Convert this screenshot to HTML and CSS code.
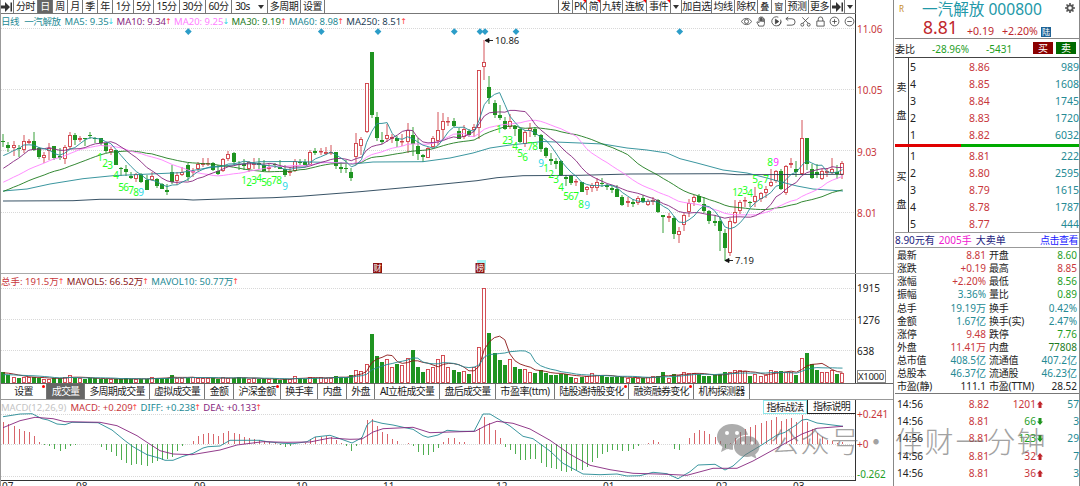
FILE: index.html
```html
<!DOCTYPE html>
<html lang="zh-CN">
<head>
    <meta charset="UTF-8">
    <title>一汽解放 000800</title>
    <link rel="stylesheet" href="styles.css">
</head>
<body>
    <div class="main">
        <div class="toolbar">
            <div class="periods">
                <span><svg width="12" height="10" viewBox="0 0 12 10"><path d="M0 3.5h4V0l5 5-5 5V6.5H0zM9.5 0.5h1.5v9H9.5z" fill="#333"/></svg></span>
                <span>分时</span>
                <span class="on">日</span>
                <span>周</span>
                <span>月</span>
                <span>季</span>
                <span>年</span>
                <span>1分</span>
                <span>5分</span>
                <span>15分</span>
                <span>30分</span>
                <span>60分</span>
                <span class="pick">30s <i class="down"></i></span>
                <span>多周期</span>
                <span>设置</span>
            </div>
            <div class="tools">
                <span>发</span>
                <span class="new">PK</span>
                <span class="new">简</span>
                <span>九转</span>
                <span class="new">连板</span>
                <span class="new">事件</span>
                <span><i class="down"></i></span>
                <span>加自选</span>
                <span>均线</span>
                <span>除权</span>
                <span class="small">叠</span>
                <span class="small">窗</span>
                <span>预测</span>
                <span>更多</span>
                <span><svg width="12" height="10" viewBox="0 0 12 10"><path d="M0 3.5h4V0l5 5-5 5V6.5H0zM9.5 0.5h1.5v9H9.5z" fill="#333"/></svg></span>
                <span><i class="down"></i></span>
            </div>
        </div>

        <div class="panel kline">
            <svg class="plot" id="kline" width="855" height="259" viewBox="0 14 855 259"></svg>
            <div class="axis red">
                <span>11.06</span>
                <span>10.05</span>
                <span>9.03</span>
                <span>8.01</span>
            </div>
            <div class="legend">
                <span class="teal name">日线</span>
                <span class="teal name">一汽解放</span>
                <span class="teal">MA5: 9.35<b class="dn">↓</b></span>
                <span class="purple">MA10: 9.34<b>↑</b></span>
                <span class="pink">MA20: 9.25<b class="dn">↓</b></span>
                <span class="dgreen">MA30: 9.19<b>↑</b></span>
                <span class="teal">MA60: 8.98<b>↑</b></span>
                <span class="navy">MA250: 8.51<b>↑</b></span>
            </div>
            <div class="icons">
                <svg viewBox="0 0 12 12"><path d="M0.5 6C3 1.5 9 1.5 11.5 6 9 10.500 3 10.500 0.500 6z"/><circle cx="6" cy="6" r="2.200"/></svg>
                <svg viewBox="0 0 12 12"><path d="M3 11C2.500 9 1 8 1 6.500c1-.5 1.500.5 2.300 1V2.500c0-1 1.400-1 1.400 0V6 1.500c0-1 1.500-1 1.500 0V6 2c0-1 1.500-1 1.500 0v4.500V3.500c0-1 1.500-1 1.500 0V8c0 1.500-.7 2-1 3z"/></svg>
                <svg viewBox="0 0 12 12"><path d="M8 1.300A5 5 0 1 0 10.500 4M8 10.700A5 5 0 0 0 11 6"/><path d="M4.800 3.500L8.500 6 4.800 8.500z" fill="#444"/></svg>
                <svg viewBox="0 0 12 12"><path d="M3.500 1L1 3l2.500 2M1 3h6.500a3.500 3.500 0 0 1 0 7H2"/></svg>
                <svg viewBox="0 0 12 12"><path d="M2.500 1.500L9 8M9.500 1.500L3 8"/><circle cx="2.500" cy="9.500" r="1.600"/><circle cx="9.500" cy="9.500" r="1.600"/></svg>
                <svg viewBox="0 0 12 12"><path d="M2 5.500h8V11H2zM3.500 5.500V3.500a2.500 2.500 0 0 1 5 0v2"/></svg>
                <svg viewBox="0 0 12 12"><circle cx="6" cy="6" r="4.800"/><path d="M3.500 6h5M6 3.500v5"/></svg>
                <svg viewBox="0 0 12 12"><circle cx="6" cy="6" r="4.800"/><path d="M3.500 6h5"/></svg>
            </div>
        </div>

        <div class="panel volume">
            <svg class="plot" id="volume" width="855" height="109" viewBox="0 275 855 109"></svg>
            <div class="axis">
                <span>1915</span>
                <span>1276</span>
                <span>638</span>
                <span class="unit">X1000</span>
            </div>
            <div class="legend">
                <span class="red">总手: 191.5万<b>↑</b></span>
                <span class="maroon">MAVOL5: 66.52万<b>↑</b></span>
                <span class="teal">MAVOL10: 50.77万<b>↑</b></span>
            </div>
        </div>

        <div class="tabs">
            <span class="dot">设置</span>
            <span class="on">成交量</span>
            <span>多周期成交量</span>
            <span>虚拟成交量</span>
            <span>金额</span>
            <span class="dot">沪深金额</span>
            <span>换手率</span>
            <span>内盘</span>
            <span>外盘</span>
            <span>AI立桩成交量</span>
            <span>盘后成交量</span>
            <span class="ttm">市盈率(ttm)</span>
            <span class="dot">陆股通持股变化</span>
            <span class="dot">融资融券变化</span>
            <span>机构探测器</span>
        </div>

        <div class="panel macd">
            <svg class="plot" id="macd" width="855" height="80" viewBox="0 400 855 80"></svg>
            <div class="axis">
                <span class="red">+0.241</span>
                <span class="red">+0</span>
                <span class="green">-0.262</span>
            </div>
            <div class="legend">
                <span class="grey">MACD(12,26,9)</span>
                <span class="red">MACD: +0.209<b>↑</b></span>
                <span class="teal">DIFF: +0.238<b>↑</b></span>
                <span class="purple">DEA: +0.133<b>↑</b></span>
            </div>
            <div class="help">
                <span>指标战法</span>
                <span>指标说明</span>
            </div>
        </div>

        <div class="dates">
            <span>07</span>
            <span>08</span>
            <span>09</span>
            <span>10</span>
            <span>11</span>
            <span>12</span>
            <span>01</span>
            <span>02</span>
            <span>03</span>
        </div>
    </div>

    <div class="side">
        <div class="quote">
            <div class="title">
                <span class="r">R</span>
                <span class="stock">一汽解放 000800</span>
                <svg class="gear" width="10" height="10" viewBox="0 0 10 10"><circle cx="5" cy="5" r="2.700" fill="none" stroke="#555" stroke-width="1.800"/><path d="M5 0v2M5 8v2M0 5h2M8 5h2M1.500 1.500l1.400 1.400M7.100 7.100l1.400 1.400M1.500 8.500l1.400-1.400M7.100 2.900l1.400-1.400" stroke="#555" stroke-width="1.600"/></svg>
            </div>
            <div class="last">
                <span class="price">8.81</span>
                <span class="chg">+0.19</span>
                <span class="chg">+2.20%</span>
                <span class="lu">陆</span>
            </div>
        </div>
        <div class="weibi">
            <span>委比</span>
            <span class="green">-28.96%</span>
            <span class="green">-5431</span>
            <span class="buy">买</span>
            <span class="sell">卖</span>
        </div>
        <div class="book">
            <div class="label"><span>卖</span><span>盘</span></div>
            <div class="levels" id="asks"></div>
        </div>
        <div class="ratio"><i></i></div>
        <div class="book bids">
            <div class="label"><span>买</span><span>盘</span></div>
            <div class="levels" id="bids"></div>
        </div>
        <div class="notice">
            <span>8.90元有</span>
            <span class="mag">2005手</span>
            <span>大卖单</span>
            <a>点击查看</a>
        </div>
        <div class="stats" id="stats"></div>
        <div class="trades" id="trades"></div>
    </div>

    <svg class="watermark" width="340" height="50" viewBox="710 417 340 50">
        <g fill="#777">
            <path d="M732 424c-9 0-15 6-15 13 0 4 2 7.500 5.500 10l-1.500 5 6-3c2 .6 3 .8 6 .8-1-9 6-15 15-15-1.500-6.500-8-10.800-16-10.800z"/>
            <path d="M747 436c-8 0-13 5-13 10.500s5 10.500 13 10.500c1.500 0 3-.2 4.500-.7l5 2.500-1.300-4.300c2.800-2 4.300-4.800 4.300-8 0-5.500-5-10.500-12.500-10.500z"/>
        </g>
        <g fill="#fff">
            <circle cx="727" cy="433" r="2"/><circle cx="737" cy="433" r="2"/>
            <circle cx="743" cy="443" r="1.700"/><circle cx="752" cy="443" r="1.700"/>
        </g>
        <g class="words">
            <text x="785" y="453">公</text>
            <text x="815" y="453">众</text>
            <text x="845" y="453">号</text>
            <text x="876" y="453">·</text>
            <text x="909" y="453">佳</text>
            <text x="939" y="453">财</text>
            <text x="970" y="453">一</text>
            <text x="1001" y="453">分</text>
            <text x="1031" y="453">钟</text>
        </g>
    </svg>

    <script src="script.js"></script>
</body>
</html>
```
FILE: styles.css
```css
* {
    box-sizing: border-box;
}
body {
    margin: 0;
    width: 1080px;
    height: 486px;
    overflow: hidden;
    position: relative;
    display: flex;
    background: white;
    color: #222;
    font-family: "Noto Sans", "Noto Sans CJK SC", sans-serif;
    font-size: 10px;
}
.red { color: #c8373c; }
.green { color: #1f9e1f; }
.dgreen { color: #1d7a1d; }
.teal { color: #258a94; }
.purple { color: #86267e; }
.pink { color: #ff80ff; }
.navy { color: #234055; }
.maroon { color: #8a1616; }
.grey { color: #c4c4c4; }
.black { color: #222; }

.main {
    width: 894px;
    height: 486px;
    border-left: 1px solid #999;
    border-right: 1px solid #888;
    overflow: hidden;
}

/* 顶部工具栏 */
.toolbar {
    display: flex;
    justify-content: space-between;
    width: 855px;
    height: 14px;
    border-bottom: 1px solid #777;
}
.periods, .tools {
    display: grid;
    line-height: 13px;
}
.periods {
    grid-template-columns: 13px 24px 15px 15px 15px 15px 15px 21px 20px 26px 26px 26px 36px 33px 24px;
}
.tools {
    grid-template-columns: 14px 14px 14px 22px 24px 24px 11px 30px 23px 23px 14px 14px 23px 22px 14px 11px;
    border-left: 1px solid #666;
}
.toolbar span {
    display: flex;
    align-items: center;
    justify-content: center;
    height: 13px;
    position: relative;
    white-space: nowrap;
    letter-spacing: -0.5px;
    border-right: 1px solid #777;
}
.tools span:last-child {
    border-right: 1px solid #444;
}
.toolbar .on, .tabs .on {
    background: #666;
    color: white;
}
.toolbar .small {
    font-size: 9px;
}
.toolbar .pick {
    gap: 8px;
}
.down {
    border-left: 3px solid transparent;
    border-right: 3px solid transparent;
    border-top: 4px solid #333;
}
.new::after {
    content: "";
    position: absolute;
    right: 0;
    top: 0;
    border-left: 3px solid transparent;
    border-top: 3px solid red;
}

.panel {
    position: relative;
    display: flex;
}
.plot {
    display: block;
    flex: none;
    margin-left: -1px;
}
.kline {
    height: 260px;
    border-bottom: 1px solid #aaa;
}
.volume {
    height: 110px;
    border-bottom: 1px solid #666;
}
.macd {
    height: 80px;
}
.legend {
    position: absolute;
    left: 0;
    top: 1px;
    display: flex;
    gap: 4px;
    font-size: 9.500px;
    line-height: 14px;
    white-space: nowrap;
}
.legend .name {
    margin-right: 1px;
    letter-spacing: -0.4px;
}
.legend .name + .name {
    margin-right: 0;
}
.legend b {
    display: inline-block;
    width: 4px;
    font-family: "DejaVu Sans";
    font-size: 8px;
    font-weight: normal;
    color: #ff3b3b;
    text-indent: -1px;
    vertical-align: top;
}
.legend .dn {
    color: #27d3e0;
}
.icons {
    position: absolute;
    right: 38px;
    top: 2px;
    display: flex;
    gap: 3.700px;
}
.icons svg {
    width: 11px;
    height: 11px;
    fill: none;
    stroke: #444;
    stroke-width: 0.900;
}

/* 坐标轴 */
.axis {
    width: 39px;
    border-left: 1px solid #333;
    padding-left: 1px;
    display: flex;
    flex-direction: column;
    line-height: 14px;
}
.kline .axis {
    padding-top: 8px;
    gap: 47.300px;
}
.volume .axis {
    padding-top: 7px;
    gap: 17.500px;
}
.volume .axis .unit {
    margin-top: -6px;
    width: 29px;
    line-height: 11px;
    border: 1px solid #888;
    font-size: 9.500px;
    letter-spacing: -0.3px;
}
.macd .axis {
    padding-top: 7px;
    gap: 16px;
}

.tabs {
    display: grid;
    grid-template-columns: 46px 38px 65px 55px 29px 47px 37px 29px 28px 65px 56px 59px 74px 65px 56px;
    height: 16px;
    border-bottom: 1px solid #999;
}
.tabs span {
    position: relative;
    text-align: center;
    line-height: 14px;
    white-space: nowrap;
    letter-spacing: -0.8px;
    border-right: 1px solid #777;
}
.tabs .ttm {
    letter-spacing: -0.4px;
}
.tabs .dot::after {
    content: "";
    position: absolute;
    right: 1px;
    top: 1px;
    width: 3px;
    height: 3px;
    border-radius: 50%;
    background: red;
}
.help {
    position: absolute;
    left: 762px;
    top: 0;
    display: flex;
}
.help span {
    width: 44px;
    height: 14px;
    line-height: 13px;
    text-align: center;
    letter-spacing: -0.7px;
    background: white;
    border: 1px solid #8ee8ea;
}
.help span + span {
    width: 48px;
    border-color: #222;
    border-top: 0;
    border-right: 0;
}
.dates {
    width: 855px;
    height: 6px;
    border-top: 1px solid #333;
    display: grid;
    grid-template-columns: 74px 118px 102px 87px 113px 107px 113px 77px 60px;
    overflow: hidden;
    line-height: 11px;
}
.dates span {
    padding-left: 1px;
}

/* 右侧盘口 */
.side {
    width: 186px;
    padding-left: 1px;
    position: relative;
    white-space: nowrap;
}
.side::after {
    content: "";
    position: absolute;
    left: 185px;
    top: 0;
    width: 1px;
    height: 486px;
    background: #888;
}
.quote {
    height: 39px;
    border-bottom: 1px solid #888;
}
.title {
    display: flex;
    height: 18px;
    line-height: 18px;
}
.title .r {
    width: 27px;
    padding-left: 4px;
    font-size: 8px;
    color: #c58a1c;
}
.title .stock {
    width: 143px;
    font-size: 15.600px;
    color: #2298a8;
}
.title .gear {
    margin-top: 3px;
}
.last {
    display: flex;
    height: 20px;
    padding-left: 28px;
    color: #c0272d;
}
.last .price {
    width: 44px;
    font-size: 17.500px;
    line-height: 18px;
}
.last .chg {
    width: 35px;
    font-size: 10.600px;
    line-height: 27px;
}
.last .lu {
    width: 10px;
    height: 10px;
    margin: 9px 0 0 4px;
    font-size: 8px;
    line-height: 10px;
    text-align: center;
    background: #1d6396;
    color: white;
}
.weibi {
    display: grid;
    grid-template-columns: 37px 54px 47px 23px 21px;
    height: 19px;
    line-height: 20px;
    border-bottom: 1px solid #444;
}
.weibi .buy, .weibi .sell {
    width: 20px;
    height: 12px;
    margin-top: 3px;
    line-height: 12px;
    text-align: center;
    color: white;
    background: #8b0000;
}
.weibi .sell {
    background: #006a00;
}
.book {
    display: flex;
    height: 86px;
}
.book .label {
    width: 14px;
    display: flex;
    flex-direction: column;
    align-items: center;
    border-right: 1px solid #444;
    padding-top: 22px;
    gap: 14px;
    line-height: 14px;
}
.book.bids {
    border-bottom: 1px solid #999;
}
.levels {
    flex: 1;
}
.levels div {
    display: grid;
    grid-template-columns: 36px 60px 73px;
    height: 17.100px;
    line-height: 18px;
    font-size: 10.500px;
    padding-left: 1px;
}
.levels div span:nth-child(2) {
    padding-left: 23px;
}
.levels div span:last-child {
    text-align: right;
}
.ratio {
    height: 3px;
    background: #00aa00;
}
.ratio i {
    display: block;
    width: 66px;
    height: 3px;
    background: #e00000;
}
.notice {
    display: flex;
    gap: 4px;
    height: 15px;
    line-height: 15px;
    border-bottom: 1px solid #999;
    color: #1c1c80;
}
.notice .mag {
    color: #f020d0;
}
.notice a {
    margin-left: auto;
    margin-right: 2px;
    letter-spacing: -0.5px;
    color: #1a1aff;
}
.stats {
    height: 146px;
    border-bottom: 1px solid #777;
}
.stats div {
    display: grid;
    grid-template-columns: 44px 44px 46px 43px;
    column-gap: 1px;
    height: 13.150px;
    line-height: 15px;
    padding-left: 2px;
}
.stats span {
    letter-spacing: -0.2px;
}
.stats span:nth-child(even) {
    text-align: right;
    letter-spacing: 0;
}
.stats span:nth-child(3) {
    padding-left: 2px;
}
.trades div {
    display: grid;
    grid-template-columns: 50px 42px 47px 7px 36px;
    height: 17.200px;
    line-height: 20px;
    padding-left: 2px;
    font-size: 10.200px;
}
.trades span:not(:first-child) {
    text-align: right;
}
.trades svg {
    margin: 7px 0 0 1px;
}

.watermark {
    position: absolute;
    left: 710px;
    top: 417px;
    opacity: 0.600;
}
.words {
    font-family: "Noto Sans CJK SC", sans-serif;
    font-size: 29px;
    font-weight: 300;
    text-anchor: middle;
    fill: #666;
}

/* 图内文字 */
.td {
    font-size: 10px;
    text-anchor: middle;
}
.mark {
    font-size: 9.500px;
    fill: #222;
}
.flag {
    font-size: 8px;
    fill: white;
    text-anchor: middle;
}
```
FILE: script.js
```js
const STEP = 5.117;
const X0 = 3.3;
const RED = '#cf3e46', GREEN = '#1f9421';
const TEAL = '#258a94', PURPLE = '#86267e';

// 颜色, 最高, 实体上沿, 实体下沿, 最低
const candles = `g134,141,142,147 g142,145,148,152 r141,145,148,156 g145,148,149,157 r135,141,150,153 r139,141,143,144 g132,141,150,151 g147,148,157,159 r152,155,158,163 r143,148,151,160
g146,146,158,160 g148,156,158,160 r145,147,159,164 r132,135,147,149 g133,135,140,145 r136,138,140,142 g138,138,139,146 g132,135,136,139 g137,138,139,143 g138,138,143,145
g143,143,151,153 r147,149,152,155 g150,150,165,165 g167,168,169,176 g165,169,172,176 g172,176,178,179 r173,174,179,182 g173,174,182,183 g175,180,190,190 r172,176,180,181
g178,179,186,188 g183,184,189,189 g184,190,192,195 g165,172,182,184 r172,175,181,185 r167,172,175,176 g163,165,177,181 r168,171,172,177 r162,164,169,171 r158,163,165,167
r158,163,164,166 g162,163,170,171 g165,171,174,175 r158,159,171,172 r151,154,159,161 g152,153,162,165 g161,164,165,170 g159,164,166,170 r161,162,169,172 r158,163,165,169
g158,163,165,169 g160,165,171,171 r163,167,169,172 g163,164,165,168 g160,167,169,169 g165,169,175,177 r167,171,173,176 r159,161,171,172 g159,162,163,165 g159,162,165,166
r150,152,165,165 g148,151,153,155 r148,151,152,155 r147,152,154,155 r145,152,153,155 g152,152,166,169 g162,167,169,173 g160,168,169,173 g168,172,178,181 r133,143,157,165
r137,139,146,155 r83,83,132,133 g52,52,115,118 g112,117,138,141 g132,140,142,144 r124,135,139,142 r134,137,139,143 g136,138,141,147 r134,141,142,146 r123,130,142,153
g127,135,144,156 g138,146,154,160 g154,155,157,162 r147,148,158,158 r136,138,147,149 r112,130,141,145 r113,121,130,140 r117,121,122,126 g118,121,126,127 g128,131,139,139
r125,129,137,139 g129,131,135,137 r124,127,130,137 r70,70,128,139 r40,62,67,80 g76,87,98,104 g100,103,115,118 g105,115,118,120 g117,121,129,130 r114,121,127,129
g125,126,129,136 g128,129,142,143 r130,132,144,147 r123,128,131,137 g127,129,135,137 g134,135,149,152 g147,148,156,158 g153,159,161,165 g158,161,164,169 g160,161,175,176
g175,177,179,186 g175,176,183,185 r179,181,182,186 g182,182,192,192 r186,187,190,195 r183,185,188,192 r178,182,188,191 g178,183,184,187 g184,185,187,190 g186,188,190,193
g185,189,197,197 g195,197,205,206 r197,201,203,207 g199,202,204,207 r196,198,203,205 g195,198,202,203 r199,201,205,206 r197,200,202,205 g199,200,212,213 g215,215,217,233
r213,216,218,222 g216,218,234,239 r227,231,235,243 r213,215,225,231 r199,203,212,217 r195,197,202,206 g194,196,202,203 g197,204,211,213 g210,211,221,224 g215,221,223,226
g217,221,231,251 g229,233,248,261 r218,221,253,256 r200,212,223,224 r200,202,211,214 r197,200,201,207 g201,202,203,207 r187,196,202,207 r192,193,199,202 r186,189,193,198
r169,182,186,187 r170,171,181,183 g169,171,189,190 r165,166,193,195 r158,163,165,168 g161,169,172,177 r120,138,174,175 g138,138,164,170 g164,169,178,179 g164,172,175,178
r169,171,179,180 r168,171,173,177 r158,169,173,174 g165,172,174,179 r161,163,175,179`.split(/\s+/).map(s => {
    const [high, top, bottom, low] = s.slice(1).split(',').map(Number);
    return { up: s[0] === 'r', high, top, bottom, low };
});

const volumes = [11,8,6,5,6,6,6,5,4,4,5,5,6,8,5,5,4,5,5,4,4,4,4,4,5,4,4,4,4,6,5,5,5,8,5,5,5,6,5,5,5,5,4,6,5,5,6,5,4,5,4,4,4,4,3,4,4,7,5,4,
    6,5,6,5,5,7,6,6,8,13,12,19,49,27,21,24,16,19,18,25,33,16,11,14,16,24,28,16,13,11,12,9,16,36,95,50,30,23,18,24,16,14,14,11,10,13,10,8,8,9,9,6,5,6,7,10,8,7,6,6,
    6,6,5,5,5,5,6,7,7,11,5,9,8,11,10,10,9,7,7,8,9,11,11,13,13,12,7,9,7,8,13,12,12,11,11,8,25,30,19,13,11,11,13,9,10];

const bars = [22,20,18,15,13,12,8,2,-1,-2,-5,-7,-5,-2,-1,0,0,0,0,-3,-6,-8,-12,-16,-19,-21,-20,-21,-22,-19,-17,-16,-15,-13,-7,-2,0,3,8,10,11,10,8,11,13,11,10,7,6,5,4,3,2,1,-1,-3,-2,0,0,1,
    5,7,7,8,7,4,1,-2,-7,-2,7,24,25,18,12,10,5,3,0,1,-2,-8,-11,-11,-8,-4,2,6,6,2,2,0,0,16,27,21,14,6,-3,-6,-10,-16,-16,-15,-15,-19,-23,-24,-25,-27,-28,-27,-26,-26,-23,-18,-14,-10,-8,-6,
    -6,-7,-7,-5,-2,0,1,4,2,0,0,-5,-6,0,6,11,14,13,10,7,3,-4,1,6,12,15,17,19,21,23,24,27,23,25,26,22,29,22,15,11,7,4,3,1,2];

const x = i => X0 + STEP * i;

function line(points, color) {
    return `<polyline points="${points}" fill="none" stroke="${color}" stroke-width="0.9"/>`;
}
function grid(ys) {
    return ys.map(y => `<line x1="1" x2="855" y1="${y}" y2="${y}" stroke="#d8d8d8" stroke-dasharray="1 1"/>`).join('');
}
// seed: 首根K线之前的数据
function average(values, seed, n) {
    const all = seed.concat(values);
    return values.map((v, i) => {
        const end = i + seed.length + 1;
        const part = all.slice(Math.max(0, end - n), end);
        return x(i).toFixed(1) + ',' + (part.reduce((a, b) => a + b, 0) / part.length).toFixed(1);
    }).join(' ');
}
function box(i, top, height, up) {
    const left = Math.round(x(i) - 2);
    if (up) {
        return `<rect x="${left + 0.5}" y="${top + 0.5}" width="3" height="${Math.max(height - 1, 0.5)}" fill="#fff" stroke="${RED}" stroke-width="0.9"/>`;
    }
    return `<rect x="${left}" y="${top}" width="4" height="${Math.max(height, 1)}" fill="${GREEN}"/>`;
}

function drawKline() {
    let svg = grid([28.5, 89.5, 150.5, 212.5]);
    candles.forEach((c, i) => {
        const mid = Math.round(x(i) - 2) + 2;
        svg += `<line x1="${mid}" x2="${mid}" y1="${c.high}" y2="${c.low}" stroke="${c.up ? RED : GREEN}" stroke-width="0.9"/>`;
        svg += box(i, c.top, c.bottom - c.top, c.up);
    });

    const close = candles.map(c => c.up ? c.top : c.bottom);
    const seed = [];
    for (let i = 0; i < 29; i++) {
        seed.push(i < 10 ? 210 : i < 20 ? 196 : i < 25 ? 181 : 159);
    }
    svg += line('3,201 73,200.7 100,199.3 183,199.3 193,200 213,199.3 247,198.3 273,197.7 300,196.3 360,191.7 423,186 477,180.7 497,177.7 523,175.7 580,175.3 630,174 723,173.7 737,174.7 843,174.3', '#234055');
    svg += line('3,191 27,189 50,184 83,178.7 113,175.7 150,174 180,172.7 207,168 233,165 260,161.7 290,161.5 340,162.7 353,164 373,162 423,161.7 450,158 473,153 490,148 510,145 543,141.5 580,143 603,144 627,148 647,150 667,153 680,158.7 697,163 723,170 747,173 767,178 780,181.7 797,186 813,189 843,191', TEAL);
    svg += line(average(close, seed, 30), '#1d7a1d');
    svg += line(average(close, seed, 20), '#ff80ff');
    svg += line(average(close, seed, 10), PURPLE);
    svg += line(average(close, seed, 5), TEAL);

    // 九转序列
    const marks = '1,100,157 2,105,163 3,110,165 4,116,175 5,121,187 6,126,187 7,131,190 8,136,192 9,141,192 1,244,180 2,249,182 3,254,180 4,259,178 5,264,182 6,269,182 7,274,180 8,279,180 9,285,186 1,499,129 2,505,140 3,510,140 4,515,146 5,520,153 6,525,157 7,530,146 8,535,146 9,541,163 1,546,168 2,551,174 3,556,179 4,561,187 5,566,196 6,571,196 7,576,196 8,581,204 9,587,205 1,735,192 2,740,192 3,745,190 4,750,193 5,755,179 6,760,185 7,766,179 8,770,162 9,776,162';
    marks.split(' ').forEach(m => {
        const [n, cx, cy] = m.split(',').map(Number);
        const color = n < 9 ? '#1eff1e' : cx > 700 ? '#ff2cff' : '#2ad8e8';
        svg += `<text class="td" x="${cx}" y="${cy + 3.5}" fill="${color}">${n}</text>`;
    });

    [188.3, 321.3, 378, 454.3, 480, 485, 516, 679.7].forEach(cx => {
        svg += `<path d="M${cx} 28.2l3.4 3.4-3.4 3.4-3.4-3.4z" fill="#2c9dc8"/>`;
    });
    svg += '<path d="M485 40.5h8M489 38.500l-4 2 4 2z" stroke="#111" fill="#111" stroke-width="0.9"/><text class="mark" x="495" y="44">10.86</text>';
    svg += '<path d="M725 260.500h8M729 258.500l-4 2 4 2z" stroke="#111" fill="#111" stroke-width="0.9"/><text class="mark" x="735" y="264">7.19</text>';
    svg += '<rect x="477" y="260" width="9" height="10" fill="#a5f5f5"/>';
    [[377.500, '财'], [480, '榜']].forEach(f => {
        svg += `<rect x="${f[0] - 4.5}" y="263" width="9" height="10" fill="#8b1010"/><text class="flag" x="${f[0]}" y="271">${f[1]}</text>`;
    });
    document.getElementById('kline').innerHTML = svg;
}

function drawVolume() {
    const base = 384;
    let svg = grid([289.5, 320.5, 351.5]);
    volumes.forEach((v, i) => {
        svg += box(i, base - v, v, candles[i].up);
    });
    const tops = volumes.map(v => base - v);
    svg += line(average(tops, [374,374,374,374,374,374,374,374,374], 5), '#8a1616');
    svg += line(average(tops, [376,376,376,376,376,376,376,376,376], 10), TEAL);
    document.getElementById('volume').innerHTML = svg;
}

function drawMacd() {
    const base = 444;
    let svg = grid([414.5, 444.5, 476.5]);
    bars.forEach((b, i) => {
        const mid = Math.round(x(i)) + 0.5;
        if (b) {
            svg += `<line x1="${mid}" x2="${mid}" y1="${base}" y2="${base - b}" stroke="${b > 0 ? '#d4545a' : '#3ba53d'}" stroke-width="0.9"/>`;
        }
    });
    svg += line('3,416.7 12,415.3 20,414 32,413.7 42,418.7 48,420 57,424 65,424.7 72,422.3 98,422.7 103,425.3 112,430 125,440.7 133,446.7 147,454.7 160,458.3 165,460.3 173,460.3 182,456.7 193,453.3 203,448 208,446.7 220,446 230,440.3 260,440.3 267,441.7 283,443.3 293,443.7 307,441.7 315,437 330,435.3 340,438.7 352,443 362,437.7 367,425 372,420.7 382,423.3 393,425 405,427.7 413,429.3 423,435.7 428,437.3 438,435 447,430.3 460,431.3 474,431.3 483,414 490,414 500,420 510,426 523,436.3 533,438.7 550,451 563,463.3 583,474 600,474.7 617,474 627,476 640,475.7 653,472.3 667,473.7 678,478.7 690,471.7 698,465 715,464.3 725,470 733,466 745,455 760,446 777,435 785,432.3 797,424.3 802,420 807,419.3 817,423 830,424.7 843,426.3', TEAL);
    svg += line('3,427.7 20,420.7 35,417.3 53,418.7 65,421.7 100,422.3 117,425.7 137,435.7 150,444.3 160,450.7 173,454 192,454.7 220,450 237,445 263,441.7 287,442.3 310,442 330,438 350,439.3 362,439 373,432 383,428.7 413,427.3 430,432.7 450,432 475,431.3 487,425 497,421.3 513,423.3 530,429 550,440.3 570,454.3 590,465.3 610,469.7 633,473.3 667,474.3 687,475.3 713,468.3 737,468.3 753,461 773,450 787,442.3 802,434 817,428.3 843,426.3', PURPLE);
    document.getElementById('macd').innerHTML = svg;
}

function fillLevels(id, rows) {
    document.getElementById(id).innerHTML = rows.map(r =>
        `<div><span>${r[0]}</span><span class="red">${r[1]}</span><span class="teal">${r[2]}</span></div>`).join('');
}

drawKline();
drawVolume();
drawMacd();

fillLevels('asks', [[5, '8.86', 989], [4, '8.85', 1608], [3, '8.84', 1745], [2, '8.83', 1720], [1, '8.82', 6032]]);
fillLevels('bids', [[1, '8.81', 222], [2, '8.80', 2595], [3, '8.79', 1615], [4, '8.78', 1787], [5, '8.77', 444]]);

const stats = [
    ['最新', '8.81', 'red', '开盘', '8.60', 'green'],
    ['涨跌', '+0.19', 'red', '最高', '8.85', 'red'],
    ['涨幅', '+2.20%', 'red', '最低', '8.56', 'green'],
    ['振幅', '3.36%', 'teal', '量比', '0.89', 'green'],
    ['总手', '19.19万', 'teal', '换手', '0.42%', 'teal'],
    ['金额', '1.67亿', 'teal', '换手(实)', '2.47%', 'teal'],
    ['涨停', '9.48', 'red', '跌停', '7.76', 'green'],
    ['外盘', '11.41万', 'red', '内盘', '77808', 'dgreen'],
    ['总市值', '408.5亿', 'teal', '流通值', '407.2亿', 'teal'],
    ['总股本', '46.37亿', 'teal', '流通股', '46.23亿', 'teal'],
    ['市盈(静)', '111.1', 'black', '市盈(TTM)', '28.52', 'black']
];
document.getElementById('stats').innerHTML = stats.map(s =>
    `<div><span>${s[0]}</span><span class="${s[2]}">${s[1]}</span><span>${s[3]}</span><span class="${s[5]}">${s[4]}</span></div>`).join('');

const trades = [['8.82', 1201, 1, 57], ['8.81', 66, 0, 3], ['8.81', 123, 0, 29], ['8.81', 32, 1, 7], ['8.81', 36, 1, 3]];
document.getElementById('trades').innerHTML = trades.map(t => {
    const arrow = t[2] ? 'M3 0l3 3.500H4.500V7h-3V3.500H0z' : 'M3 7l3-3.500H4.500V0h-3v3.500H0z';
    return `<div><span>14:56</span><span class="red">${t[0]}</span><span class="${t[2] ? 'red' : 'green'}">${t[1]}</span>
        <svg width="6" height="7"><path d="${arrow}" fill="${t[2] ? '#c0272d' : '#1f941f'}"/></svg><span class="teal">${t[3]}</span></div>`;
}).join('');
```
